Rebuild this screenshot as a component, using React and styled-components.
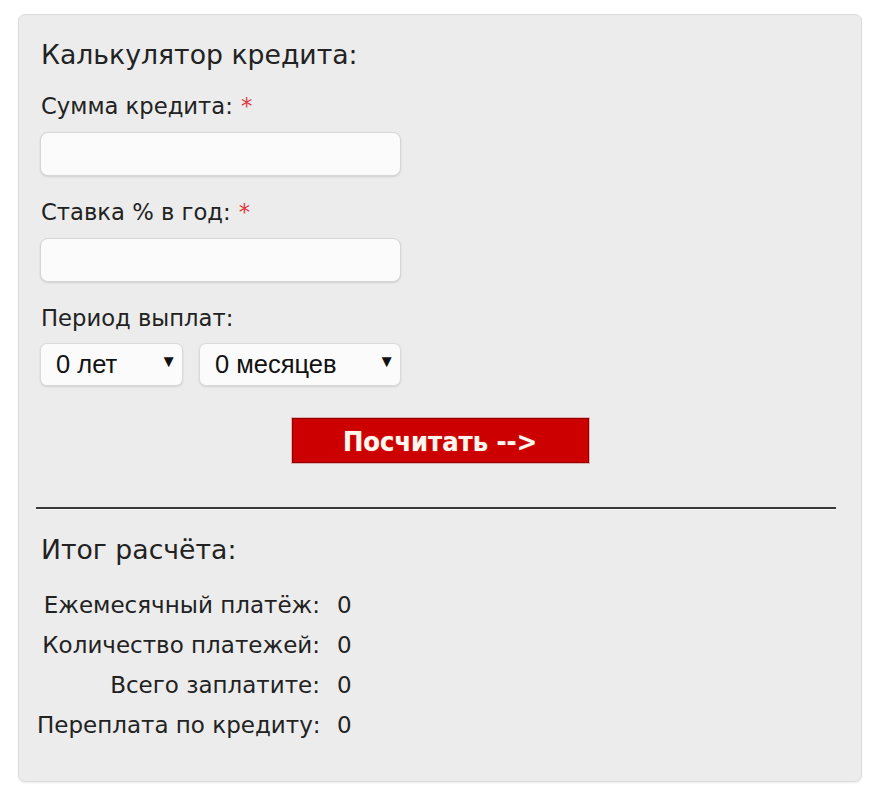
import React from "react";
import styled, { createGlobalStyle } from "styled-components";

const Global = createGlobalStyle`
  html, body { margin: 0; padding: 0; background: #ffffff; }
  body { font-family: "DejaVu Sans", Verdana, sans-serif; color: #1a1a1a; }
`;

const Page = styled.div`
  width: 880px;
  height: 798px;
  padding: 14px 18px 0 18px;
  box-sizing: border-box;
`;

const Panel = styled.div`
  width: 844px;
  height: 768px;
  box-sizing: border-box;
  background: #ececec;
  border: 1px solid #dcdcdc;
  border-radius: 7px;
  box-shadow: 0 1px 2px rgba(0,0,0,0.08);
  padding: 24px 22px 0 18px;
  display: flex;
  flex-direction: column;
`;

const Title = styled.div`
  font-size: 26.7px;
  line-height: 32px;
  color: #222;
  margin-left: 4px;
`;

const Form = styled.div`
  display: flex;
  flex-direction: column;
  margin-left: 4px;
`;

const Label = styled.div`
  font-size: 22.7px;
  line-height: 28px;
  color: #222;
  margin-top: ${p => p.$mt}px;
`;

const Star = styled.span`
  color: #e0393e;
  margin-left: 8px;
`;

const Input = styled.input`
  display: block;
  width: 361px;
  height: 44px;
  box-sizing: border-box;
  margin-top: 12px;
  margin-left: -1px;
  background: #fbfbfb;
  border: 1px solid #d6d6d6;
  border-radius: 8px;
  box-shadow: 0 1px 2px rgba(0,0,0,0.12);
  outline: none;
`;

const SelectRow = styled.div`
  display: flex;
  gap: 16px;
  margin-top: 11px;
  margin-left: -1px;
`;

const Select = styled.div`
  width: ${p => p.$w}px;
  height: 43px;
  box-sizing: border-box;
  background: #fbfbfb;
  border: 1px solid #dadada;
  border-radius: 7px;
  box-shadow: 0 1px 2px rgba(0,0,0,0.12);
  display: flex;
  align-items: center;
  justify-content: space-between;
  padding: 0 5px 0 15px;
  font-family: "Liberation Sans", Arial, sans-serif;
  font-size: 25.5px;
  color: #111;
`;

const Caret = styled.span`
  font-size: 17px;
  color: #111;
  margin-top: -6px;
`;

const ButtonRow = styled.div`
  display: flex;
  justify-content: center;
  margin-top: 32px;
  padding-left: 4px;
`;

const Button = styled.button`
  width: 297px;
  height: 45px;
  box-sizing: border-box;
  background: #cc0000;
  border: 1px solid #8f0000;
  outline: 1px solid #e2b0b0;
  color: #fff6ee;
  font-family: "DejaVu Sans Condensed", "DejaVu Sans", Tahoma, sans-serif;
  font-weight: bold;
  font-size: 27px;
  line-height: 30px;
  padding: 3px 0 0 0;
  text-shadow: 0 0 1px rgba(255, 200, 180, 0.6);
  cursor: pointer;
`;

const Rule = styled.div`
  height: 2px;
  background: #3a3a3a;
  margin: 44px 0 0 -1px;
  width: 800px;
  box-shadow: 0 1px 0 rgba(255,255,255,0.6);
`;

const ResultTitle = styled(Title)`
  margin-top: 25px;
`;

const Results = styled.div`
  display: grid;
  grid-template-columns: 283px auto;
  column-gap: 17px;
  row-gap: 12px;
  margin-top: 25px;
  justify-content: start;
`;

const RLabel = styled.div`
  font-size: 23px;
  line-height: 28px;
  text-align: right;
  white-space: nowrap;
  color: #222;
`;

const RValue = styled.div`
  font-size: 23px;
  line-height: 28px;
  color: #222;
`;

const rows = [
  ["Ежемесячный платёж:", "0"],
  ["Количество платежей:", "0"],
  ["Всего заплатите:", "0"],
  ["Переплата по кредиту:", "0"],
];

export default function App() {
  return (
    <Page>
      <Global />
      <Panel>
        <Title>Калькулятор кредита:</Title>
        <Form>
          <Label $mt={21}>Сумма кредита:<Star>*</Star></Label>
          <Input />
          <Label $mt={22}>Ставка % в год:<Star>*</Star></Label>
          <Input />
          <Label $mt={22}>Период выплат:</Label>
          <SelectRow>
            <Select $w={143}>0 лет<Caret>▼</Caret></Select>
            <Select $w={202}>0 месяцев<Caret>▼</Caret></Select>
          </SelectRow>
        </Form>
        <ButtonRow>
          <Button>Посчитать --&gt;</Button>
        </ButtonRow>
        <Rule />
        <ResultTitle>Итог расчёта:</ResultTitle>
        <Results>
          {rows.map(([l, v]) => (
            <React.Fragment key={l}>
              <RLabel>{l}</RLabel>
              <RValue>{v}</RValue>
            </React.Fragment>
          ))}
        </Results>
      </Panel>
    </Page>
  );
}
